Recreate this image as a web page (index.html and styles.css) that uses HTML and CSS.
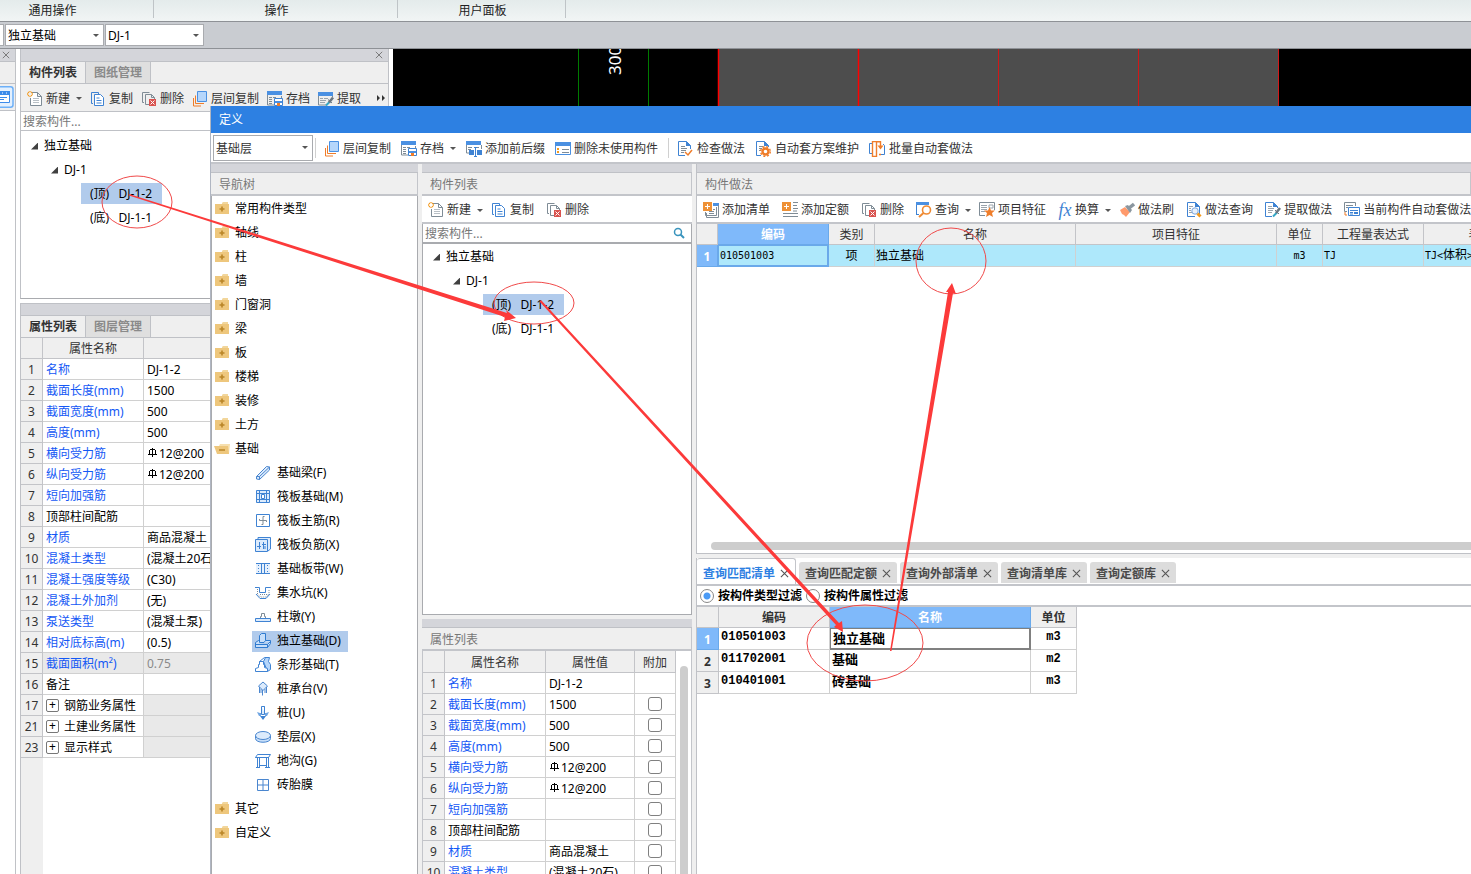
FILE: index.html
```html
<!DOCTYPE html>
<html lang="zh-CN">
<head>
<meta charset="utf-8">
<title>定义</title>
<link rel="stylesheet" href="styles.css">
</head>
<body>
<svg class="sprite" aria-hidden="true">
  <symbol id="i-new" viewBox="0 0 16 16"><path d="M5 1.500h5.500l4 4v9h-11V7M10.500 1.500v4h4" fill="#fff" stroke="#7f8c96"/><path d="M6 7.500h6M6 9.500h6M6 11.500h6" stroke="#b9c0c6"/><path d="M1 1l1 1m2 2l1 1M5 1L4 2M2 4L1 5M3 0v1M3 5v1M0 3h1M5 3h1" stroke="#f39a1e" stroke-width="1.300"/></symbol>
  <symbol id="i-copy" viewBox="0 0 16 16"><path d="M3 12.500H1.500v-11h7V3" fill="none" stroke="#3f83d3"/><path d="M4.500 3.500h6l3 3v8h-9z" fill="#fff" stroke="#3f83d3"/><path d="M6.500 7h3M6.500 9.500h5M6.500 12h5" stroke="#3f83d3"/></symbol>
  <symbol id="i-del" viewBox="0 0 16 16"><path d="M3 11.500H1.500v-10h7" fill="none" stroke="#7f8c96"/><path d="M8 13.500H4.500v-10h6l3 3V8M10.500 3.500v3h3" fill="none" stroke="#7f8c96"/><path d="M8 8h7v7H8z" fill="#d9534f"/><path d="M9.500 9.500l4 4m0-4l-4 4" stroke="#fff"/></symbol>
  <symbol id="i-floors" viewBox="0 0 16 16"><path d="M1.500 7v8H9" fill="none" stroke="#ef7d2a"/><path d="M3.500 4.500v8H12" fill="none" stroke="#ef7d2a"/><path d="M5.500.500h9v10h-9z" fill="#b5d6fb" stroke="#4a90e2"/></symbol>
  <symbol id="i-save" viewBox="0 0 16 16"><path d="M.500 1v13H7M14.500 5v2" fill="none" stroke="#7f8c96"/><path d="M0 0h15v4H0z" fill="#4a90e2"/><path d="M2 6.500h3m1 0h3M2 8.500h3M2 10.500h3M2 12.500h3" stroke="#7f8c96"/><path d="M7.500 7.500h8v7h-8z" fill="#fff" stroke="#3f83d3"/><path d="M8 10h7v2H8z" fill="#4a90e2"/><path d="M10 12h3v3h-3z" fill="#ef7d2a"/></symbol>
  <symbol id="i-pick" viewBox="0 0 16 16"><path d="M.500 2v12h8M14.500 4v2" fill="none" stroke="#7f8c96"/><path d="M0 1h15v4H0z" fill="#4a90e2"/><path d="M2 7.500h3m1 0h4M2 9.500h6M2 11.500h5" stroke="#9aa4ad"/><path d="M8 14.500l4-4" stroke="#35a7c4" stroke-width="2"/><path d="M11 11.500l4-5" stroke="#6b7680" stroke-width="2.600"/><path d="M10 8.500l4 3.500" stroke="#6b7680"/></symbol>
  <symbol id="i-affix" viewBox="0 0 16 16"><path d="M.500 1v11H3M15.500 4v4" fill="none" stroke="#7f8c96"/><path d="M0 0h15v4H0z" fill="#4a90e2"/><path d="M2 6.500h4M2 8.500h3M10 6.500h3" stroke="#7f8c96"/><path d="M3 9h5v5H3zM11 9h5v5h-5z" fill="#3f83d3"/><path d="M9.500 6v9.500M8 6.500h3M8 15.500h3" stroke="#3f83d3"/></symbol>
  <symbol id="i-unused" viewBox="0 0 16 16"><path d="M.500 1.500h15v12H.500z" fill="#fff" stroke="#4a90e2"/><path d="M0 1h16v4H0z" fill="#4a90e2"/><path d="M2 7l2 2m0-2L2 9m0 1l2 2m0-2l-2 2" stroke="#f39a1e"/><path d="M7 8.500h7M7 11.500h7" stroke="#7f8c96"/></symbol>
  <symbol id="i-check" viewBox="0 0 16 16"><path d="M8 14.500H1.500V.500h8l4 4V8" fill="#fff" stroke="#3f83d3"/><path d="M9 0v5h5z" fill="#3f83d3"/><path d="M4 5.500h4M4 7.500h6M4 9.500h5M4 11.500h3" stroke="#7f8c96"/><path d="M8 11l3 3 4-5" fill="none" stroke="#ef7d2a" stroke-width="1.500"/></symbol>
  <symbol id="i-gear" viewBox="0 0 16 16"><path d="M6 14.500H1.500V.500h8l4 4V6" fill="#fff" stroke="#3f83d3"/><path d="M9 0v5h5z" fill="#3f83d3"/><path d="M4 5.500h4M4 7.500h3M4 9.500h2" stroke="#7f8c96"/><circle cx="10.500" cy="10.500" r="3" fill="#fff" stroke="#ef7d2a" stroke-width="2.400"/><circle cx="10.500" cy="10.500" r="4.800" fill="none" stroke="#ef7d2a" stroke-width="1.400" stroke-dasharray="2 1.800"/></symbol>
  <symbol id="i-batch" viewBox="0 0 16 16"><path d="M3 2.500H.500v10H3M12 13.500h3.500v-9L14 3" fill="none" stroke="#3f83d3"/><path d="M3.500 .500v15h4v-15z" fill="#fff" stroke="#ef7d2a" stroke-width="1.400"/><path d="M10 13.500h2M7 .700h4.500V6" fill="none" stroke="#ef7d2a" stroke-width="1.400"/><path d="M8.500 4.500h6l-3 4z" fill="#ef7d2a"/></symbol>
  <symbol id="i-addlist" viewBox="0 0 16 16"><path d="M10 1h6v3h-6z" fill="#4a90e2"/><path d="M15.500 3v12.500h-12V11M13.500 5v8.500H2.500V10" fill="none" stroke="#7f8c96"/><path d="M6 9.500h5M6 11.500h5M10 7.500h2" stroke="#7f8c96"/><path d="M0 0h9v9H0z" fill="#ee9136"/><path d="M4.500 2v5M2 4.500h5" stroke="#fff"/></symbol>
  <symbol id="i-addquota" viewBox="0 0 16 16"><path d="M11 .500h5M11 3.500h4M11 6.500h5M11 9h4M1 11.500h15M1 14.500h15" stroke="#7f8c96"/><path d="M0 0h9v9H0z" fill="#ee9136"/><path d="M4.500 2v5M2 4.500h5" stroke="#fff"/></symbol>
  <symbol id="i-query" viewBox="0 0 16 16"><path d="M.500 2v11M.500 12.500H3" stroke="#3f83d3"/><path d="M0 0h13v3H0z" fill="#4a90e2"/><circle cx="10.500" cy="8" r="4" fill="#fff" stroke="#ef8a33" stroke-width="1.600"/><path d="M7.500 11L3 15" stroke="#ef8a33" stroke-width="2"/></symbol>
  <symbol id="i-feature" viewBox="0 0 16 16"><path d="M6 13.500H.500V.500h15V8" fill="#fff" stroke="#7f8c96"/><path d="M2 3.500h6M2 5.500h6M2 7.500h6M2 9.500h4" stroke="#9aa4ad"/><path d="M10 3h4v3h-4z" fill="none" stroke="#9aa4ad"/><path d="M10.500 5l1.500 3.500h4l-3 2.500 1 4-3.500-2L7 15l1-4-3-2.500h4z" fill="#ef7d2a"/></symbol>
  <symbol id="i-brush" viewBox="0 0 16 16"><path d="M1 8l5-3 5 5-4 5-2-2-2-1z" fill="#ff9a6c"/><path d="M6 4l3-1 4 5-2 3z" fill="#8a969f"/><path d="M10 6l5-4" stroke="#8a969f" stroke-width="3.500"/></symbol>
  <symbol id="i-docquery" viewBox="0 0 16 16"><path d="M9 14.500H1.500V.500h8l4 4V12" fill="#fff" stroke="#3f83d3"/><path d="M9 0v5h5z" fill="#3f83d3"/><path d="M3 4.500h4M3 6.500h2M3 8.500h2M3 10.500h3" stroke="#9aa4ad"/><circle cx="9" cy="9" r="3.200" fill="#e8f1fc" stroke="#7aa7e0"/><path d="M11.500 11.500l3 3" stroke="#f39a1e" stroke-width="3"/></symbol>
  <symbol id="i-docpick" viewBox="0 0 16 16"><path d="M7 14.500H.500V.500h8l4 4V6" fill="#fff" stroke="#3f83d3"/><path d="M8 0v5h5z" fill="#3f83d3"/><path d="M3 4.500h4M3 6.500h6M3 8.500h5M3 10.500h4" stroke="#9aa4ad"/><path d="M8 14.500l4-4" stroke="#35a7c4" stroke-width="2"/><path d="M11 11l4-5" stroke="#6b7680" stroke-width="2.600"/><path d="M10 8l4 4" stroke="#6b7680"/></symbol>
  <symbol id="i-auto" viewBox="0 0 16 16"><path d="M3 9.500H.500V.500h11V4" fill="none" stroke="#7f8c96"/><path d="M2 3.500h7M2 5.500h2" stroke="#7f8c96"/><path d="M4.500 5.500h11v8h-11z" fill="#fff" stroke="#3f83d3"/><path d="M6 8.500h8M6 10.500h3M6 12h3" stroke="#3f83d3"/><path d="M10 10h4v2h-4z" fill="#3f83d3"/><path d="M1 10v3h2" fill="none" stroke="#ef7d2a"/></symbol>
  <symbol id="i-folder" viewBox="0 0 16 16"><path d="M8 2l1-1h5v2H8z" fill="#f2d69b"/><path d="M1 3h14v10H1z" fill="#eec77d"/><path d="M8 5.500v5M5.500 8h5" stroke="#b98527" stroke-width="1.600"/></symbol>
  <symbol id="i-open" viewBox="0 0 16 16"><path d="M5 5l1-2h10l-1 10H4z" fill="#f6dfae"/><path d="M0 5h14l1 8H3z" fill="#eec77d"/><path d="M5 9h6" stroke="#b98527" stroke-width="1.500"/></symbol>
  <symbol id="i-beam" viewBox="0 0 16 16"><path d="M1.500 11.500l10-10 3 .5v3l-10 9.500-3-.5zM1.500 11.500h3v3M4.500 11.500l10-9.500" fill="#dcebfc" stroke="#4a86cf"/></symbol>
  <symbol id="i-raft" viewBox="0 0 16 16"><path d="M1.500 1.500h13v12h-13zM1 4.500h14M1 10.500h14M4.500 1v13M11.500 1v13" fill="#dcebfc" stroke="#3f83d3"/><path d="M6.500 5.500h3v4h-3z" fill="#fff" stroke="#3f83d3"/></symbol>
  <symbol id="i-main" viewBox="0 0 16 16"><path d="M1.500 1.500h13v12h-13z" fill="#fff" stroke="#3f83d3"/><path d="M9.500 3.500H8v8H6.500M4.500 6v1.500h7V9" fill="none" stroke="#7f8c96"/></symbol>
  <symbol id="i-neg" viewBox="0 0 16 16"><path d="M3 3V.500h12.500V12L13 14" fill="#dcebfc" stroke="#3f83d3"/><path d="M.500 2.500h12v12H.500z" fill="#dcebfc" stroke="#3f83d3"/><path d="M4.500 5v7M8.500 5v7M2 9.500h4M7 7.500h4M10 9v3" fill="none" stroke="#3f83d3"/></symbol>
  <symbol id="i-band" viewBox="0 0 16 16"><path d="M1 2h14v11H1z" fill="#e6f0fc"/><path d="M1 2.500h14M1 12.500h14M6.500 3v9M9.500 3v9" fill="none" stroke="#3f83d3"/><path d="M3.500 4v8M12.500 4v8" stroke="#3f83d3" stroke-dasharray="1 2"/></symbol>
  <symbol id="i-pit" viewBox="0 0 16 16"><path d="M0 2.500h4.500v5h6v-5H16" fill="none" stroke="#3f83d3"/><path d="M2.500 4v5l3 3h6l2.500-3.500V4M5 9.500h7" fill="none" stroke="#7f8c96" stroke-dasharray="1 1"/><path d="M1 9l4 4.500h6L15 9" fill="none" stroke="#3f83d3"/></symbol>
  <symbol id="i-pier" viewBox="0 0 16 16"><path d="M.500 9.500h15v3H.500z" fill="#dcebfc" stroke="#3f83d3"/><path d="M5.500 9V7.500h1v-3h3v3h1V9" fill="none" stroke="#7f8c96"/></symbol>
  <symbol id="i-iso" viewBox="0 0 16 16"><path d="M.500 9.500l3-2h12v3l-3 4H.500zM.500 11.500h12l3-3M12.500 11.500v3" fill="#c7dffa" stroke="#2f7bd0"/><path d="M4.500 9.500v-7l2-2h4v7l-1.500 2z" fill="#c7dffa" stroke="#2f7bd0"/></symbol>
  <symbol id="i-strip" viewBox="0 0 16 16"><path d="M8.500 4.500l2-4h4l-1 4 2 3v5l-3 2z" fill="#b5d6fb" stroke="#3f83d3"/><path d="M.500 14.500v-3l3-1v-3h1v-3h4v3h1v3l3 1v3z" fill="#fff" stroke="#3f83d3"/><path d="M4.500 4.500l5-4h3" fill="none" stroke="#3f83d3"/></symbol>
  <symbol id="i-cap" viewBox="0 0 16 16"><path d="M8 1l4.500 4L8 9.500 3.500 5z" fill="#dcebfc" stroke="#4a86cf"/><path d="M4.500 6v6M7.500 9v5.500M11.500 6v6M6 8v4M10 8v4" fill="none" stroke="#4a86cf"/></symbol>
  <symbol id="i-pile" viewBox="0 0 16 16"><path d="M6.500 1.500h3v6H9.500M6.500 1.500v8h3v-8" fill="#dcebfc" stroke="#3f83d3"/><path d="M2 7l3 1h1v3h4V8h1l3-1-2 4H4z" fill="#6fa5e2"/><path d="M5 11h6l-3 4z" fill="#3f83d3"/></symbol>
  <symbol id="i-cushion" viewBox="0 0 16 16"><path d="M.500 6.500v3c0 5 15 5 15 0v-3z" fill="#c7dffa" stroke="#4a86cf"/><ellipse cx="8" cy="6.500" rx="7.500" ry="4" fill="#dcebfc" stroke="#4a86cf"/></symbol>
  <symbol id="i-trench" viewBox="0 0 16 16"><path d="M.500 4.500l2-3h13l-2 3zM.500 4.500h12M2.500 5v9M4.500 5v9M1 14.500h4M11.500 5v9M13.500 4v10M10 14.500h5M4.500 12.500h7" fill="none" stroke="#3f83d3"/></symbol>
  <symbol id="i-brick" viewBox="0 0 16 16"><path d="M2.500 2.500h11v11h-11zM8 2v12" fill="#fff" stroke="#4a86cf"/><path d="M2 8h12" stroke="#4a86cf"/></symbol>
  <symbol id="i-rebar" viewBox="0 0 10 12"><path d="M4.500 0v9M0 6.500h9M1.500 2v4M7.500 2v4M2 1.500h5" fill="none" stroke="#000"/></symbol>
  <symbol id="i-x" viewBox="0 0 10 10"><path d="M1 1l8 8M9 1L1 9" stroke="currentColor" stroke-width="1.200"/></symbol>
  <symbol id="i-search" viewBox="0 0 12 12"><circle cx="5" cy="5" r="3.500" fill="none" stroke="#3a94bd" stroke-width="1.500"/><path d="M7.500 7.500L11 11" stroke="#3a94bd" stroke-width="2"/></symbol>
  <symbol id="i-more" viewBox="0 0 10 8"><path d="M1 1l3 3-3 3zM6 1l3 3-3 3z" fill="#333"/></symbol>
</svg>

<div class="app">
  <header class="ribbon">
    <div class="ribbon-group first">通用操作</div>
    <div class="ribbon-group second">操作</div>
    <div class="ribbon-group third">用户面板</div>
  </header>
  <div class="combo-bar">
    <span class="combo-stub"></span>
    <label class="combo"><select aria-label="构件类型"><option>独立基础</option></select></label>
    <label class="combo"><select aria-label="构件"><option>DJ-1</option></select></label>
  </div>

  <main class="workspace">
    <aside class="rail">
      <div class="strip"><svg class="close"><use href="#i-x"/></svg></div>
      <div class="rail-tabs"></div>
      <div class="rail-tools"><svg class="rail-icon" viewBox="0 0 14 22"><path d="M-4 .750H10.500q2.500 0 2.500 2.500v15.500q0 2.500-2.500 2.500H-4" fill="#e3f0fe" stroke="#6db0f8" stroke-width="1.500"/><path d="M-1 5.500H9.500v11H-1z" fill="#fff" stroke="#3b8bea"/><path d="M0 5h10v4H0z" fill="#3b8bea"/><path d="M2 7h1m3 0h1" stroke="#fff"/><path d="M0 11.500h7M0 13.500h4" stroke="#3b8bea"/></svg></div>
    </aside>

    <section class="dock">
      <div class="dock-top">
        <div class="strip"><svg class="close"><use href="#i-x"/></svg></div>
        <div class="tabs"><button class="tab on">构件列表</button><button class="tab">图纸管理</button></div>
        <div class="tools compact">
          <button><svg><use href="#i-new"/></svg>新建<i class="caret"></i></button>
          <button><svg><use href="#i-copy"/></svg>复制</button>
          <button><svg><use href="#i-del"/></svg>删除</button>
          <button><svg><use href="#i-floors"/></svg>层间复制</button>
          <button><svg><use href="#i-save"/></svg>存档</button>
          <button><svg><use href="#i-pick"/></svg>提取</button>
          <button class="more" aria-label="更多"><svg><use href="#i-more"/></svg></button>
        </div>
        <div class="search"><input type="text" placeholder="搜索构件..." aria-label="搜索构件"></div>
        <ul class="tree members">
          <li class="l1"><i class="twist"></i>独立基础</li>
          <li class="l2"><i class="twist"></i>DJ-1</li>
          <li class="l3"><span class="leaf on">(顶)&nbsp;&nbsp; DJ-1-2</span></li>
          <li class="l3"><span class="leaf">(底)&nbsp;&nbsp; DJ-1-1</span></li>
        </ul>
      </div>
      <div class="dock-bottom">
        <div class="strip"></div>
        <div class="tabs"><button class="tab on">属性列表</button><button class="tab">图层管理</button></div>
        <table class="grid props">
          <colgroup><col class="c22"><col class="c101"><col></colgroup>
          <thead><tr><th></th><th>属性名称</th><th></th></tr></thead>
          <tbody>
            <tr><th>1</th><td class="key">名称</td><td>DJ-1-2</td></tr>
            <tr><th>2</th><td class="key">截面长度(mm)</td><td>1500</td></tr>
            <tr><th>3</th><td class="key">截面宽度(mm)</td><td>500</td></tr>
            <tr><th>4</th><td class="key">高度(mm)</td><td>500</td></tr>
            <tr><th>5</th><td class="key">横向受力筋</td><td><svg class="rebar"><use href="#i-rebar"/></svg>12@200</td></tr>
            <tr><th>6</th><td class="key">纵向受力筋</td><td><svg class="rebar"><use href="#i-rebar"/></svg>12@200</td></tr>
            <tr><th>7</th><td class="key">短向加强筋</td><td></td></tr>
            <tr><th>8</th><td>顶部柱间配筋</td><td></td></tr>
            <tr><th>9</th><td class="key">材质</td><td>商品混凝土</td></tr>
            <tr><th>10</th><td class="key">混凝土类型</td><td>(混凝土20石)</td></tr>
            <tr><th>11</th><td class="key">混凝土强度等级</td><td>(C30)</td></tr>
            <tr><th>12</th><td class="key">混凝土外加剂</td><td>(无)</td></tr>
            <tr><th>13</th><td class="key">泵送类型</td><td>(混凝土泵)</td></tr>
            <tr><th>14</th><td class="key">相对底标高(m)</td><td>(0.5)</td></tr>
            <tr class="locked"><th>15</th><td class="key">截面面积(m²)</td><td>0.75</td></tr>
            <tr><th>16</th><td>备注</td><td></td></tr>
            <tr><th>17</th><td><button class="plus">+</button>钢筋业务属性</td><td class="off"></td></tr>
            <tr><th>21</th><td><button class="plus">+</button>土建业务属性</td><td class="off"></td></tr>
            <tr><th>23</th><td><button class="plus">+</button>显示样式</td><td class="off"></td></tr>
          </tbody>
        </table>
        <div class="gutter"></div>
      </div>
    </section>

    <svg class="drawing">
      <rect width="100%" height="100%" fill="#000"/>
      <rect x="325" width="560" height="100%" fill="#4d4d4d"/>
      <path d="M185.500 0v900M255.500 0v900" stroke="#007a00"/>
      <path d="M325.500 0v900M465.500 0v900" stroke="#f00" stroke-width="1.500"/>
      <path d="M605.500 0v900M745.500 0v900M885.500 0v900" stroke="#d01818"/>
      <text transform="translate(228 26) rotate(-90)" class="dim">300</text>
    </svg>
  </main>

  <section class="dialog" role="dialog" aria-label="定义">
    <div class="dialog-title">定义</div>
    <div class="dialog-tools tools">
      <label class="combo wide"><select aria-label="楼层"><option>基础层</option></select></label>
      <i class="sep"></i>
      <button><svg><use href="#i-floors"/></svg>层间复制</button>
      <button><svg><use href="#i-save"/></svg>存档<i class="caret"></i></button>
      <button><svg><use href="#i-affix"/></svg>添加前后缀</button>
      <button><svg><use href="#i-unused"/></svg>删除未使用构件</button>
      <i class="sep second-sep"></i>
      <button><svg><use href="#i-check"/></svg>检查做法</button>
      <button><svg><use href="#i-gear"/></svg>自动套方案维护</button>
      <button><svg><use href="#i-batch"/></svg>批量自动套做法</button>
    </div>

    <div class="columns">
      <nav class="pane nav-pane">
        <div class="pane-strip"></div>
        <h2 class="pane-title">导航树</h2>
        <ul class="tree nav-tree">
          <li><svg><use href="#i-folder"/></svg>常用构件类型</li>
          <li><svg><use href="#i-folder"/></svg>轴线</li>
          <li><svg><use href="#i-folder"/></svg>柱</li>
          <li><svg><use href="#i-folder"/></svg>墙</li>
          <li><svg><use href="#i-folder"/></svg>门窗洞</li>
          <li><svg><use href="#i-folder"/></svg>梁</li>
          <li><svg><use href="#i-folder"/></svg>板</li>
          <li><svg><use href="#i-folder"/></svg>楼梯</li>
          <li><svg><use href="#i-folder"/></svg>装修</li>
          <li><svg><use href="#i-folder"/></svg>土方</li>
          <li><svg><use href="#i-open"/></svg>基础</li>
          <li class="sub"><span><svg><use href="#i-beam"/></svg>基础梁(F)</span></li>
          <li class="sub"><span><svg><use href="#i-raft"/></svg>筏板基础(M)</span></li>
          <li class="sub"><span><svg><use href="#i-main"/></svg>筏板主筋(R)</span></li>
          <li class="sub"><span><svg><use href="#i-neg"/></svg>筏板负筋(X)</span></li>
          <li class="sub"><span><svg><use href="#i-band"/></svg>基础板带(W)</span></li>
          <li class="sub"><span><svg><use href="#i-pit"/></svg>集水坑(K)</span></li>
          <li class="sub"><span><svg><use href="#i-pier"/></svg>柱墩(Y)</span></li>
          <li class="sub"><span class="on"><svg><use href="#i-iso"/></svg>独立基础(D)</span></li>
          <li class="sub"><span><svg><use href="#i-strip"/></svg>条形基础(T)</span></li>
          <li class="sub"><span><svg><use href="#i-cap"/></svg>桩承台(V)</span></li>
          <li class="sub"><span><svg><use href="#i-pile"/></svg>桩(U)</span></li>
          <li class="sub"><span><svg><use href="#i-cushion"/></svg>垫层(X)</span></li>
          <li class="sub"><span><svg><use href="#i-trench"/></svg>地沟(G)</span></li>
          <li class="sub"><span><svg><use href="#i-brick"/></svg>砖胎膜</span></li>
          <li><svg><use href="#i-folder"/></svg>其它</li>
          <li><svg><use href="#i-folder"/></svg>自定义</li>
        </ul>
      </nav>

      <div class="stack list-stack">
        <section class="pane">
          <div class="pane-strip"></div>
          <h2 class="pane-title">构件列表</h2>
          <div class="tools row-tools">
            <button class="drop"><svg><use href="#i-new"/></svg>新建<i class="caret"></i></button>
            <button><svg><use href="#i-copy"/></svg>复制</button>
            <button><svg><use href="#i-del"/></svg>删除</button>
          </div>
          <div class="search boxed"><input type="text" placeholder="搜索构件..." aria-label="搜索构件"><svg><use href="#i-search"/></svg></div>
          <ul class="tree members framed">
            <li class="l1"><i class="twist"></i>独立基础</li>
            <li class="l2"><i class="twist"></i>DJ-1</li>
            <li class="l3"><span class="leaf on">(顶)&nbsp;&nbsp; DJ-1-2</span></li>
            <li class="l3"><span class="leaf">(底)&nbsp;&nbsp; DJ-1-1</span></li>
          </ul>
        </section>
        <section class="pane">
          <div class="pane-strip"></div>
          <h2 class="pane-title">属性列表</h2>
          <div class="scroll-area">
            <table class="grid props">
              <colgroup><col class="c22"><col class="c101"><col class="c89"><col class="c41"></colgroup>
              <thead><tr><th></th><th>属性名称</th><th>属性值</th><th>附加</th></tr></thead>
              <tbody>
                <tr><th>1</th><td class="key">名称</td><td>DJ-1-2</td><td></td></tr>
                <tr><th>2</th><td class="key">截面长度(mm)</td><td>1500</td><td class="tick"><input type="checkbox" aria-label="附加 截面长度"></td></tr>
                <tr><th>3</th><td class="key">截面宽度(mm)</td><td>500</td><td class="tick"><input type="checkbox" aria-label="附加 截面宽度"></td></tr>
                <tr><th>4</th><td class="key">高度(mm)</td><td>500</td><td class="tick"><input type="checkbox" aria-label="附加 高度"></td></tr>
                <tr><th>5</th><td class="key">横向受力筋</td><td><svg class="rebar"><use href="#i-rebar"/></svg>12@200</td><td class="tick"><input type="checkbox" aria-label="附加 横向受力筋"></td></tr>
                <tr><th>6</th><td class="key">纵向受力筋</td><td><svg class="rebar"><use href="#i-rebar"/></svg>12@200</td><td class="tick"><input type="checkbox" aria-label="附加 纵向受力筋"></td></tr>
                <tr><th>7</th><td class="key">短向加强筋</td><td></td><td class="tick"><input type="checkbox" aria-label="附加 短向加强筋"></td></tr>
                <tr><th>8</th><td>顶部柱间配筋</td><td></td><td class="tick"><input type="checkbox" aria-label="附加 顶部柱间配筋"></td></tr>
                <tr><th>9</th><td class="key">材质</td><td>商品混凝土</td><td class="tick"><input type="checkbox" aria-label="附加 材质"></td></tr>
                <tr><th>10</th><td class="key">混凝土类型</td><td>(混凝土20石)</td><td class="tick"><input type="checkbox" aria-label="附加 混凝土类型"></td></tr>
              </tbody>
            </table>
            <div class="vbar"></div>
          </div>
        </section>
      </div>

      <div class="stack work-stack">
        <section class="pane">
          <div class="pane-strip"></div>
          <h2 class="pane-title">构件做法</h2>
          <div class="tools row-tools">
            <button><svg><use href="#i-addlist"/></svg>添加清单</button>
            <button><svg><use href="#i-addquota"/></svg>添加定额</button>
            <button><svg><use href="#i-del"/></svg>删除</button>
            <button class="drop"><svg><use href="#i-query"/></svg>查询<i class="caret"></i></button>
            <button><svg><use href="#i-feature"/></svg>项目特征</button>
            <button class="drop"><span class="fx">fx</span>换算<i class="caret"></i></button>
            <button><svg><use href="#i-brush"/></svg>做法刷</button>
            <button><svg><use href="#i-docquery"/></svg>做法查询</button>
            <button><svg><use href="#i-docpick"/></svg>提取做法</button>
            <button><svg><use href="#i-auto"/></svg>当前构件自动套做法</button>
          </div>
          <div class="sheet">
            <table class="grid works">
              <colgroup><col class="c21"><col class="c111"><col class="c46"><col class="c201"><col class="c201"><col class="c46"><col class="c101"><col class="c150"></colgroup>
              <thead><tr><th></th><th class="sel">编码</th><th>类别</th><th>名称</th><th>项目特征</th><th>单位</th><th>工程量表达式</th><th>表达式说明</th></tr></thead>
              <tbody><tr><th class="sel">1</th><td class="focus"><span class="mono">010501003</span></td><td class="mid">项</td><td>独立基础</td><td></td><td class="mid mono">m3</td><td class="mono">TJ</td><td><span class="mono">TJ&lt;</span>体积<span class="mono">&gt;</span></td></tr></tbody>
            </table>
          </div>
          <div class="hbar-track"><div class="hbar"></div></div>
        </section>
        <section class="pane lower">
          <div class="sheet-tabs">
            <button class="on">查询匹配清单<svg><use href="#i-x"/></svg></button>
            <button>查询匹配定额<svg><use href="#i-x"/></svg></button>
            <button>查询外部清单<svg><use href="#i-x"/></svg></button>
            <button>查询清单库<svg><use href="#i-x"/></svg></button>
            <button>查询定额库<svg><use href="#i-x"/></svg></button>
          </div>
          <div class="filters">
            <label><input type="radio" name="filter" checked>按构件类型过滤</label>
            <label><input type="radio" name="filter">按构件属性过滤</label>
          </div>
          <table class="grid matches">
            <colgroup><col class="c22"><col class="c111"><col class="c201"><col class="c46"></colgroup>
            <thead><tr><th></th><th>编码</th><th class="sel">名称</th><th>单位</th></tr></thead>
            <tbody>
              <tr><th class="sel">1</th><td class="mono">010501003</td><td class="focus">独立基础</td><td class="mid mono">m3</td></tr>
              <tr><th>2</th><td class="mono">011702001</td><td>基础</td><td class="mid mono">m2</td></tr>
              <tr><th>3</th><td class="mono">010401001</td><td>砖基础</td><td class="mid mono">m3</td></tr>
            </tbody>
          </table>
        </section>
      </div>
    </div>
  </section>

  <svg class="markup" aria-hidden="true">
    <g fill="none" stroke="#f04a4a">
      <ellipse cx="137" cy="202" rx="35" ry="26"/>
      <ellipse cx="534" cy="303" rx="40" ry="21"/>
      <ellipse cx="951" cy="261" rx="35" ry="33"/>
      <ellipse cx="865" cy="643" rx="58" ry="38"/>
    </g>
    <g fill="#fc3a3a">
      <path d="M129 194L507 313l-1-3 10 8-12 3 1-4L129 195.500z"/>
      <path d="M541 300L839 623l3-2 1 11-9-5 2-2L539.500 301.500z"/>
      <path d="M890 651L948 292h-2l6-9 4 11-3-1L891.500 651z"/>
    </g>
  </svg>
</div>
</body>
</html>
```

FILE: styles.css
```css
* { box-sizing: border-box; }

body {
  margin: 0;
  background: #fff;
  color: #000;
  font: 12px/16px "Noto Sans", "Noto Sans CJK SC", sans-serif;
}

button, input, select {
  margin: 0;
  padding: 0;
  border: 0;
  background: none;
  color: inherit;
  font: inherit;
}

ul { margin: 0; padding: 0; list-style: none; }

.sprite { display: none; }

.app {
  position: relative;
  display: flex;
  flex-direction: column;
  height: 100vh;
  overflow: hidden;
}

/* Ribbon and combo bar */
.ribbon {
  display: flex;
  flex: none;
  height: 22px;
  background: linear-gradient(#e4ebeb, #f1f5f5);
  border-bottom: 1px solid #8e9196;
  color: #222;
}
.ribbon-group {
  height: 18px;
  border-right: 1px solid #bfc4c7;
  line-height: 21px;
  text-align: center;
}
.first { width: 154px; padding-right: 48px; }
.second { width: 244px; padding-left: 2px; }
.third { width: 168px; padding-left: 2px; }

.combo-bar {
  display: flex;
  flex: none;
  gap: 1px;
  height: 27px;
  padding: 2px 0;
  background: #c9ccd1;
  border-bottom: 1px solid #8e9196;
}
.combo-stub { width: 4px; background: #fff; border: 1px solid #a9abaf; border-left: 0; }
.combo {
  position: relative;
  width: 99px;
  background: #fff;
  border: 1px solid #a9abaf;
}
.combo select { width: 100%; height: 100%; padding: 2px 0 0 2px; appearance: none; }
.combo::after {
  content: "";
  position: absolute;
  right: 4px;
  top: 45%;
  border: 3px solid transparent;
  border-top-color: #555;
  border-bottom: 0;
}

/* Workspace behind the dialog */
.workspace { display: flex; flex: 1; min-height: 0; gap: 4px; }
.rail { width: 16px; flex: none; border-right: 1px solid #c0c2c6; }
.strip {
  display: flex;
  flex: none;
  align-items: center;
  justify-content: flex-end;
  height: 13px;
  padding-right: 5px;
  background: #d4d5da;
  border-bottom: 1px solid #bfc1c6;
}
.close { width: 8px; height: 8px; color: #777; }
.rail-tabs { height: 22px; background: #efefef; border-bottom: 1px solid #bfc1c6; }
.rail-tools { height: 27px; padding-top: 2px; background: #efefef; border-bottom: 1px solid #bfc1c6; }
.rail-icon { display: block; width: 14px; height: 22px; }

.dock {
  display: flex;
  flex: none;
  flex-direction: column;
  width: 369px;
  gap: 4px;
}
.dock-top, .dock-bottom {
  display: flex;
  flex-direction: column;
  border: 1px solid #bfc1c6;
  border-top: 0;
}
.dock-top { flex: 0 0 250px; border-bottom-color: #a9abaf; }
.dock-bottom { flex: 1; min-height: 0; border-bottom: 0; }
.dock-bottom .strip { border-top: 1px solid #bfc1c6; }
.tabs { display: flex; flex: none; height: 22px; background: #efefef; border-bottom: 1px solid #bfc1c6; }
.tab {
  width: 65px;
  border-right: 1px solid #bfc1c6;
  background: #dfdfdf;
  color: #8a8a8a;
  font-weight: bold;
}
.tab.on { background: #efefef; color: #333; }

.tools { display: flex; flex: none; align-items: center; color: #333; overflow: hidden; }
.tools button { display: flex; flex: none; align-items: center; gap: 3px; padding: 2px 6px 0; white-space: nowrap; }
.tools svg { width: 16px; height: 16px; }
.caret {
  margin: 0 0 0 3px;
  border: 3px solid transparent;
  border-top-color: #555;
  border-bottom: 0;
}
.compact { height: 28px; padding-left: 2px; background: #efefef; border-bottom: 1px solid #bfc1c6; }
.compact button { padding: 2px 4px 0; }
.compact .more { margin-left: auto; padding: 0 2px; }
.compact .more svg { width: 10px; height: 8px; }

.search { display: flex; flex: none; align-items: center; height: 19px; background: #fff; border-bottom: 1px solid #bfc1c6; }
.search input { flex: 1; min-width: 0; padding: 2px 0 0 2px; outline: 0; }
.search input::placeholder { color: #777; opacity: 1; }
.search svg { width: 12px; height: 12px; margin-right: 6px; }
.search.boxed { height: 20px; border-left: 1px solid #a9abaf; border-right: 1px solid #a9abaf; border-bottom: 2px solid #a9abaf; }

.tree { background: #fff; }
.tree li { display: flex; align-items: center; height: 24px; white-space: nowrap; }
.members { flex: 1; padding-top: 2px; }
.members.framed { padding-top: 0; border: 1px solid #a9abaf; border-top: 0; }
.twist {
  width: 7px;
  height: 7px;
  margin-right: 6px;
  background: #404040;
  clip-path: polygon(100% 0, 100% 100%, 0 100%);
}
.tree .l1 { padding: 2px 0 0 10px; }
.tree .l2 { padding: 2px 0 0 30px; }
.tree .l3 { padding-left: 60px; }
.leaf { width: 81px; padding: 3px 0 2px 9px; }
.leaf.on, .nav-tree .on { background: #b1cbec; }

/* Data grids */
.grid { table-layout: fixed; border-spacing: 0; background: #fff; }
.grid th, .grid td {
  padding: 0 3px;
  border: solid #d0d0d0;
  border-width: 0 1px 1px 0;
  overflow: hidden;
  text-align: left;
  white-space: nowrap;
}
.grid th { padding: 2px 0 0; border-color: #c3c4c8; background: #efefef; color: #333; font-weight: normal; text-align: center; }
.grid .sel { background: #7fb9fa; border-color: #6aa9ea; color: #fff; font-weight: bold; }
.grid .mid { text-align: center; }
.c21 { width: 21px; }
.c22 { width: 22px; }
.c41 { width: 41px; }
.c46 { width: 46px; }
.c89 { width: 89px; }
.c101 { width: 101px; }
.c111 { width: 111px; }
.c150 { width: 150px; }
.c201 { width: 201px; }

.props th, .props td { height: 21px; padding-top: 2px; line-height: 18px; }
.props .key { color: #1458f5; }
.props .off, .props .locked td { background: #e9e9e9; }
.props .locked td:last-child { color: #8a8a8a; }
.props .tick { padding: 0; text-align: center; }
.dock .props { width: 100%; flex: none; }
.rebar { width: 10px; height: 12px; margin: 0 1px; vertical-align: -2px; }
.plus {
  width: 13px;
  height: 13px;
  margin-right: 5px;
  border: 1px solid #777;
  border-radius: 2px;
  background: #fff;
  line-height: 10px;
  vertical-align: 1px;
}
.tick input {
  display: block;
  width: 14px;
  height: 14px;
  margin: 0 auto;
  appearance: none;
  border: 1px solid #808080;
  border-radius: 3px;
  background: #fff;
}
.gutter { flex: 1; width: 22px; background: #efefef; }

.drawing { flex: 1; min-width: 0; height: 100%; }
.dim { fill: #fff; font-size: 17px; }

/* Definition dialog */
.dialog {
  position: absolute;
  top: 106px;
  right: 0;
  bottom: 0;
  left: 210px;
  display: flex;
  flex-direction: column;
  background: #efefef;
  border-left: 1px solid #b0b6c2;
}
.dialog-title { flex: none; height: 27px; padding-left: 8px; background: #2d80e2; color: #fff; line-height: 28px; }
.dialog-tools { height: 31px; padding-left: 2px; background: #fff; border-bottom: 2px solid #c3c5ca; }
.wide { flex: none; width: 100px; height: 26px; margin-right: 2px; }
.sep { width: 1px; height: 20px; margin-right: 3px; background: #d0d0d0; }
.dialog-tools button { padding: 2px 5px 0; }
.second-sep { margin-left: 5px; }
.second-sep ~ button { gap: 4px; }

.columns { display: grid; flex: 1; grid-template-columns: 207px 270px minmax(0, 1fr); gap: 4px; min-height: 0; }
.stack { display: grid; gap: 4px; min-height: 0; }
.list-stack { grid-template-rows: 451px minmax(0, 1fr); }
.work-stack { grid-template-rows: 390px minmax(0, 1fr); }
.pane { display: flex; flex-direction: column; min-height: 0; overflow: hidden; }
.pane-strip { flex: none; height: 9px; background: #d4d5da; border-bottom: 1px solid #bfc1c6; }
.pane-title {
  flex: none;
  height: 23px;
  margin: 0;
  padding-left: 8px;
  border: 1px solid #c3c5ca;
  border-width: 0 1px 2px 0;
  color: #777;
  font-size: 12px;
  font-weight: normal;
  line-height: 23px;
}
.nav-tree { flex: 1; border: 1px solid #a9abaf; border-width: 0 1px; }
.nav-tree li { padding-top: 2px; }
.nav-tree svg { width: 16px; height: 16px; margin: 0 5px 0 2px; }
.nav-tree .sub { padding-left: 40px; }
.sub span { display: flex; align-items: center; height: 21px; padding-right: 7px; }
.nav-tree .sub svg { margin: 0 6px 0 3px; }
.row-tools { height: 28px; background: #fff; border-bottom: 2px solid #c3c5ca; }
.work-stack .pane { border-left: 1px solid #bfc1c6; }
.fx { width: 14px; color: #3f83d3; font: italic 18px/16px "Liberation Serif", serif; }
.tools .drop { margin-right: -4px; }

.scroll-area { display: flex; flex: 1; min-height: 0; background: #fff; border: 1px solid #c3c5ca; border-width: 0 1px; overflow: hidden; }
.scroll-area .props { flex: none; width: 253px; align-self: flex-start; }
.scroll-area thead th { height: 22px; }
.vbar { width: 8px; margin: 15px 0 0 4px; border-radius: 4px 4px 0 0; background: #cdcdcd; }

.sheet { flex: 1; min-height: 0; background: #fff; overflow: hidden; }
.works { width: 877px; }
.works thead th, .matches thead th { height: 21px; }
.works tbody th, .works td, .matches tbody th, .matches td { height: 22px; line-height: 18px; }
.works td { padding: 0 1px; background: #aee8fb; }
.works .focus { border: 2px solid #6aa9ea; border-width: 1px 2px 2px 1px; }
.works .mono { font-family: "DejaVu Sans Mono", monospace; font-size: 10px; }
.hbar-track { flex: none; height: 12px; padding-left: 14px; background: #fff; border-bottom: 1px solid #bfc1c6; }
.hbar { height: 8px; border-radius: 4px 0 0 4px; background: #cdcdcd; }

.lower { background: #fff; }
.sheet-tabs { display: flex; flex: none; align-items: flex-end; gap: 3px; height: 28px; border-bottom: 2px solid #c3c5ca; }
.sheet-tabs button {
  display: flex;
  align-items: center;
  gap: 5px;
  height: 21px;
  margin-bottom: 1px;
  padding: 2px 6px 0;
  border-radius: 3px 3px 0 0;
  background: #dcdcdc;
  color: #4a4a4a;
  font-weight: bold;
}
.sheet-tabs svg { width: 9px; height: 9px; color: #555; }
.sheet-tabs .on { height: 26px; margin: 0; padding-top: 4px; border: 1px solid #c3c5ca; border-width: 1px 1px 0 0; background: #fff; color: #2d80e2; }
.filters { display: flex; flex: none; gap: 4px; height: 21px; padding-left: 3px; border-bottom: 2px solid #c3c5ca; font-weight: bold; }
.filters label { display: flex; align-items: center; gap: 4px; }
.filters input { width: 14px; height: 14px; appearance: none; border: 1px solid #888; border-radius: 50%; background: #fff; }
.filters input:checked { background: radial-gradient(circle, #4a9af5 0 3px, #fff 4px); }
.matches { width: 380px; }
.matches thead th, .matches tbody th, .matches td { font-weight: bold; }
.matches td { padding: 0 2px 2px; font-size: 13px; }
.matches .mono { font-family: "Liberation Mono", monospace; font-size: 12px; }
.matches tbody td { line-height: 17px; }
.matches td.focus { padding-bottom: 1px; border: 2px solid #808080; border-width: 1px 2px 2px 1px; }

/* Hand-drawn circles and arrows over both windows */
.markup { position: absolute; top: 0; left: 0; width: 100%; height: 100%; pointer-events: none; }
```
